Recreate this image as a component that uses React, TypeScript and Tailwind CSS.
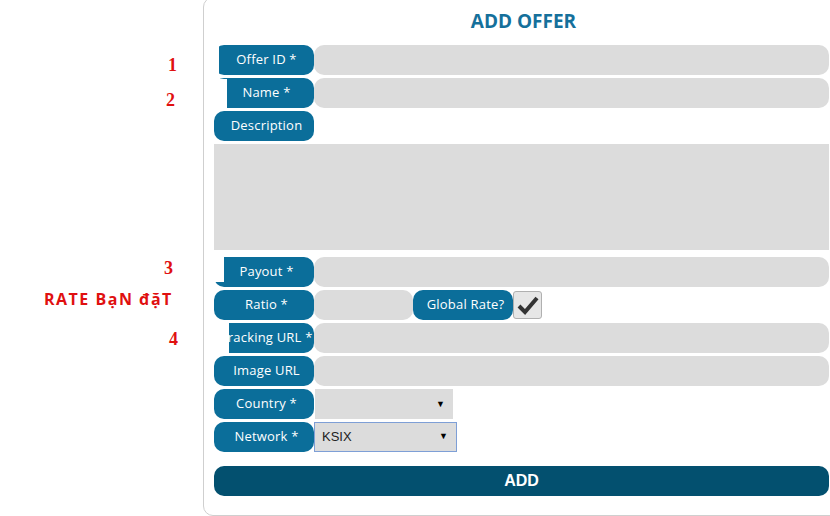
import React from 'react';

const labelCls =
  "w-[100px] h-[30px] shrink-0 rounded-[10px] bg-[#0b6e9a] text-white text-[13px] flex items-center justify-center pl-[5px] tracking-[0.2px]";
const inputCls = "flex-1 h-[30px] rounded-[10px] bg-[#dcdcdc]";

function Row({ label, children }: { label: string; children?: React.ReactNode }) {
  return (
    <div className="flex h-[30px] mb-[3px]">
      <div className={labelCls}>{label}</div>
      {children ?? <div className={inputCls} />}
    </div>
  );
}

function Note({ x, y, text, cls = "" }: { x: number; y: number; text: string; cls?: string }) {
  return (
    <div
      className={`absolute text-[#e01010] font-bold leading-none ${cls}`}
      style={{ left: x, top: y }}
    >
      {text}
    </div>
  );
}

export default function App() {
  return (
    <div
      className="relative w-[830px] h-[516px] bg-white overflow-hidden"
      style={{ fontFamily: '"Open Sans", "Liberation Sans", sans-serif' }}
    >
      {/* Form card */}
      <div className="ml-[203px] mt-[-3px] w-[637px] h-[519px] border border-[#cfcfcf] rounded-[10px] px-[10px]">
        <h1 className="text-center text-[19px] font-bold text-[#15709b] h-[47px] pt-[10px] pl-[4px] leading-[26px]">
          ADD OFFER
        </h1>

        <Row label="Offer ID *" />
        <Row label="Name *" />
        <Row label="Description">
          <div className="flex-1" />
        </Row>
        <div className="h-[106px] bg-[#dcdcdc] mb-[7px]" />

        <Row label="Payout *" />
        <Row label="Ratio *">
          <div className="w-[99px] h-[30px] rounded-[10px] bg-[#dcdcdc]" />
          <div className={labelCls}>Global Rate?</div>
          <div className="w-[29px] h-[28px] mt-[1px] rounded-[3px] border border-[#b0b0b0] bg-[#e6e6e6] flex items-center justify-center">
            <svg width="22" height="20" viewBox="0 0 22 20">
              <path d="M2 11 L8 17 L20 3" fill="none" stroke="#333" strokeWidth="4" strokeLinejoin="miter" />
            </svg>
          </div>
        </Row>
        <Row label="Tracking URL *" />
        <Row label="Image URL" />
        <Row label="Country *">
          <div className="w-[138px] ml-[1px] h-[30px] bg-[#dcdcdc] flex items-center justify-end pr-[8px]">
            <span className="text-[9px] text-black">▼</span>
          </div>
        </Row>
        <Row label="Network *">
          <div
            className="w-[143px] h-[30px] bg-[#dcdcdc] border border-[#7e9fd6] flex items-center justify-between pl-[7px] pr-[8px]"
            style={{ fontFamily: '"Liberation Sans", Arial, sans-serif' }}
          >
            <span className="text-[13px] text-[#222]">KSIX</span>
            <span className="text-[9px] text-black">▼</span>
          </div>
        </Row>

        <button
          className="mt-[11px] w-full h-[30px] rounded-[10px] bg-[#03506f] text-white text-[16px] font-bold"
          style={{ fontFamily: '"Liberation Sans", Arial, sans-serif' }}
        >
          ADD
        </button>
      </div>

      {/* Annotation layer */}
      <div className="absolute left-[212px] top-[43px] w-[7px] h-[33px] bg-white" />
      <div className="absolute left-[212px] top-[79px] w-[15px] h-[29px] bg-white" />
      <div className="absolute left-[212px] top-[255px] w-[12px] h-[27px] bg-white" />
      <div className="absolute left-[212px] top-[321px] w-[17px] h-[32px] bg-white" />

      <Note x={168} y={56} text="1" cls="text-[18px] font-['Liberation_Serif',serif]" />
      <Note x={166} y={91} text="2" cls="text-[18px] font-['Liberation_Serif',serif]" />
      <Note x={164} y={259} text="3" cls="text-[18px] font-['Liberation_Serif',serif]" />
      <Note x={44} y={291} text="RATE BạN đặT" cls="text-[16px] tracking-[1.5px]" />
      <Note x={169} y={330} text="4" cls="text-[18px] font-['Liberation_Serif',serif]" />
    </div>
  );
}
